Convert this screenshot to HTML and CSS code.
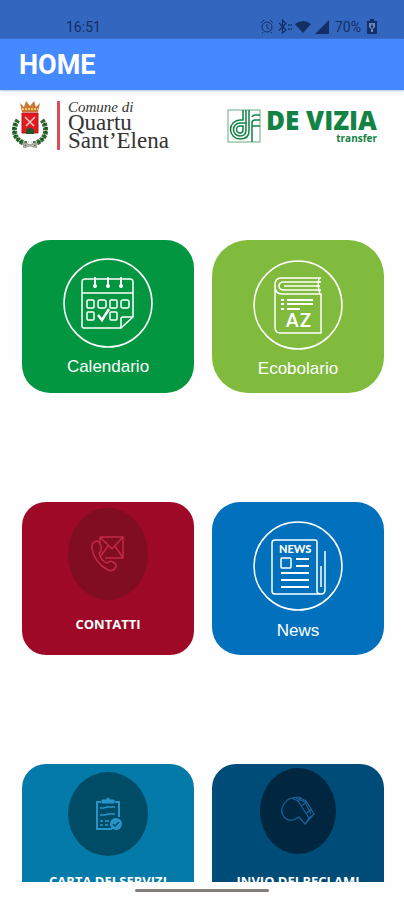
FILE: index.html
```
<!DOCTYPE html>
<html lang="it">
<head>
    <meta charset="UTF-8">
    <meta name="viewport" content="width=device-width, initial-scale=1.0">
    <title>Home</title>
    <link rel="stylesheet" href="styles.css">
</head>
<body>
    <div class="status-bar">
        <span class="clock">16:51</span>
        <div class="status-icons">
            <svg width="51" height="16" viewBox="0 0 51 16" fill="none" stroke="#142f63" stroke-width="1">
                <!-- alarm -->
                <circle cx="7" cy="8" r="5"/>
                <path d="M7 5v3.500l2 1.500M1 4l3-3M13 4l-3-3M3 13l-1 1M11 13l1 1"/>
                <!-- bluetooth -->
                <path d="M19 4l7 7-3.500 3V1L26 4.500l-7 7" stroke-width="1.200"/>
                <path d="M28 6h4M28 10h4" stroke-width="1.500" stroke-dasharray="1.500 1"/>
                <!-- wifi -->
                <path d="M35 5q8-6 16 0l-8 9z" fill="#142f63" stroke="none"/>
            </svg>
            <svg width="16" height="16" viewBox="0 0 16 16"><path d="M1 15L15 1v14z" fill="#142f63"/></svg>
            <span class="battery-level">70%</span>
            <svg width="12" height="17" viewBox="0 0 12 17">
                <path d="M4 1h4v2h3v13H1V3h3z" fill="#142f63"/>
                <path d="M3 5h6v4l-2 2v3H5v-3L3 9z" fill="#6c8dc6"/>
                <path d="M6.500 5v3h1L5.500 12V9h-1z" fill="#142f63"/>
            </svg>
        </div>
    </div>

    <header class="app-bar">
        <h1>HOME</h1>
    </header>

    <main class="content">
        <div class="brands">
            <div class="comune">
                <svg width="38" height="50" viewBox="0 0 38 50">
                    <!-- laurel wreath -->
                    <path d="M7 20C0 29 3 42 17 44M31 20c7 9 4 22-10 24" fill="none" stroke="#326b32" stroke-width="5" stroke-dasharray="3 1"/>
                    <path d="M5 23C0 31 5 41 15 45M33 23c5 8 0 18-10 22" fill="none" stroke="#174a20" stroke-width="2" stroke-dasharray="2 2"/>
                    <path d="M12 43l12 4M26 43l-12 4M13 43v5M25 43v5" stroke="#aaa7a4" stroke-width="2"/>
                    <!-- crown -->
                    <path d="M11 12L9 3l4 4 2-6 4 5 4-5 2 6 4-4-2 9z" fill="#c97838"/>
                    <path d="M11 9h16" stroke="#f1c66b" stroke-width="2" stroke-dasharray="2 1"/>
                    <!-- shield -->
                    <path d="M11 13h16v20H11z" fill="#e3191f" stroke="#b31920"/>
                    <path d="M14 17l9 9M24 17l-9 9" stroke="#f7c9c0" stroke-width="1.500"/>
                    <path d="M15 34v-4q4-5 8 0v4z" fill="#215829"/>
                </svg>
                <div class="comune-name">
                    <em>Comune di</em>
                    <span>Quartu</span>
                    <span>Sant’Elena</span>
                </div>
            </div>
            <div class="devizia">
                <svg width="34" height="34" viewBox="0 0 34 34" fill="none" stroke="#128344">
                    <rect x="1" y="1" width="32" height="32" stroke="#6aae84"/>
                    <g stroke-width="1.500">
                        <path d="M16 1v10h-3a9 9 0 0 0 0 19q9 0 9-8V1"/>
                        <path d="M19 1v13h-6a6 6 0 0 0 0 13q6 0 6-6v-7"/>
                        <path d="M16 17h-3a3 3 0 0 0 0 7q3 0 3-3z"/>
                        <path d="M25 33V14q0-3 3-3h5M25 8q1-2 3-2h5M25 17h8"/>
                    </g>
                </svg>
                <div class="devizia-name">
                    <strong>DE VIZIA</strong>
                    <span>transfer</span>
                </div>
            </div>
        </div>

        <nav class="tiles">
            <a href="#calendario" class="tile calendario">
                <svg width="90" height="90" viewBox="0 0 90 90" fill="none" stroke="#fff" stroke-width="1.500">
                    <circle cx="45" cy="45" r="44"/>
                    <path d="M58 70H21q-2 0-2-2V24q0-3 3-3h45q3 0 3 3v35zM58 70V61q0-2 2-2h10M19 35h51"/>
                    <path d="M32 19v9M45 19v9M58 19v9" stroke-width="2"/>
                    <g fill="#fff" stroke="none"><circle cx="32" cy="28" r="2"/><circle cx="45" cy="28" r="2"/><circle cx="58" cy="28" r="2"/></g>
                    <rect x="24" y="42" width="7" height="8" rx="1"/>
                    <rect x="35" y="42" width="8" height="8" rx="2"/>
                    <rect x="47" y="42" width="7" height="8" rx="1"/>
                    <rect x="58" y="42" width="8" height="8" rx="2"/>
                    <rect x="24" y="54" width="7" height="8" rx="1"/>
                    <rect x="47" y="54" width="7" height="8" rx="1"/>
                    <path d="M35 57l4 5 7-11" stroke-width="2.500"/>
                </svg>
                <span>Calendario</span>
            </a>
            <a href="#ecobolario" class="tile ecobolario">
                <svg width="90" height="90" viewBox="0 0 90 90" fill="none" stroke="#fff" stroke-width="1.500">
                    <circle cx="45" cy="45" r="44"/>
                    <path d="M68 18H28q-6 0-6 7v42q0 6 5 6h41V34H29q-7 0-7-8"/>
                    <path d="M68 22H31q-5 0-5 4t5 4h37M66 18q-2 8 1 16M31 26h36"/>
                    <path d="M34 40h26M34 44h26M34 49h13M28 40h3M28 44h3M28 49h3" stroke-width="2"/>
                    <text x="33" y="67" class="az-text">A</text>
                    <text x="47" y="67" class="az-text">Z</text>
                </svg>
                <span>Ecobolario</span>
            </a>
            <a href="#contatti" class="tile contatti">
                <svg width="82" height="92" viewBox="0 0 82 92" fill="none" stroke="#c22a45" stroke-width="1.500">
                    <ellipse cx="41" cy="46" rx="40" ry="46" fill="#800d22" stroke="none"/>
                    <path d="M33 29h23v21H38M33 29l12 12 11-12M33 49l8-11M56 50l-8-12M33 29v6"/>
                    <path d="M30 33q-6 1-5 8 3 14 16 21 5 2 8-3 1-3-3-5-3-2-6 1-6-2-8-10 3-2 2-6-1-5-4-6z"/>
                </svg>
                <span>CONTATTI</span>
            </a>
            <a href="#news" class="tile news">
                <svg width="90" height="90" viewBox="0 0 90 90" fill="none" stroke="#fff" stroke-width="1.500">
                    <circle cx="45" cy="45" r="44"/>
                    <path d="M64 70q0 3 4 3 4 0 4-4V30M64 70V21q0-2-2-2H22q-3 0-3 3v48q0 3 3 3h46"/>
                    <path d="M68 45v21"/>
                    <text x="26" y="32" class="news-text">NEWS</text>
                    <rect x="28" y="37" width="10" height="10" rx="1"/>
                    <path d="M43 38h13M43 45h13M28 52h28M28 59h28M28 66h28" stroke-width="2"/>
                </svg>
                <span>News</span>
            </a>
            <a href="#carta-servizi" class="tile servizi">
                <svg width="82" height="84" viewBox="0 0 82 84" fill="none" stroke="#2795c9" stroke-width="2">
                    <ellipse cx="41" cy="42" rx="40" ry="42" fill="#004c66" stroke="none"/>
                    <path d="M45 57H30V30h4M48 30h4v15"/>
                    <path d="M35 31v-3h4q2-4 4 0h4v3z" fill="#2795c9" stroke-width="1"/>
                    <path d="M33 36h4l3-1h8M33 43h5l3-1h7M33 49h3M38 49h4M33 53h3M38 53h3" stroke-width="1.500"/>
                    <circle cx="49" cy="52" r="6" fill="#2795c9" stroke="none"/>
                    <path d="M46 52l2 2 4-4" stroke="#004c66" stroke-width="1.500"/>
                </svg>
                <span>CARTA DEI SERVIZI</span>
            </a>
            <a href="#reclami" class="tile reclami">
                <svg width="78" height="86" viewBox="0 0 78 86" fill="none" stroke="#1b6298" stroke-width="1.200">
                    <ellipse cx="39" cy="43" rx="38" ry="43" fill="#002640" stroke="none"/>
                    <path d="M33 30l6-1 8 4 8 13-9 10-6-7q-8 6-14 1-6-6-1-14 3-5 8-6zM33 30l6 3 11 17M39 33l3-4M42 38l6-4M47 46l5-5M50 50l5-4M46 56l4-6M37 30l9 4 6 12"/>
                </svg>
                <span>INVIO DEI RECLAMI</span>
            </a>
        </nav>
    </main>

    <div class="gesture-bar"><div class="handle"></div></div>
</body>
</html>
```
FILE: styles.css
```
* {
    box-sizing: border-box;
}
body {
    margin: 0;
    height: 100vh;
    display: flex;
    flex-direction: column;
    background-color: #fefefe;
    font-family: Roboto, sans-serif;
}
.status-bar {
    display: flex;
    justify-content: space-between;
    align-items: center;
    flex-shrink: 0;
    height: 39px;
    padding: 14px 26px 0 66px;
    background-color: #3366bf;
    color: #142f63;
    font-size: 14px;
}
.status-icons {
    display: flex;
    align-items: center;
    gap: 3px;
}
.battery-level {
    margin: 0 2px;
}
.app-bar {
    display: flex;
    align-items: center;
    flex-shrink: 0;
    height: 51px;
    padding: 0 19px;
    background-color: #4489ff;
    color: white;
    z-index: 1;
    box-shadow: 0 1px 2px #a9c4ee;
}
.app-bar h1 {
    margin: 0;
    font-size: 27px;
    line-height: 32px;
}
.content {
    flex: 1;
    min-height: 0;
    overflow-y: auto;
    scrollbar-width: none;
}
.brands {
    display: flex;
    justify-content: space-between;
    align-items: flex-start;
    height: 60px;
    padding: 10px 27px 0 11px;
}
.comune {
    display: flex;
    align-items: center;
    gap: 8px;
}
.comune-name {
    display: flex;
    flex-direction: column;
    padding-left: 8px;
    border-left: 3px solid #d6505c;
    color: #333;
    font-family: "Liberation Serif", serif;
    font-size: 23px;
    line-height: 18px;
}
.comune-name em {
    font-size: 15px;
    line-height: 13px;
}
.devizia {
    display: flex;
    gap: 5px;
    padding-top: 9px;
    color: #128344;
    font-family: "Open Sans", sans-serif;
}
.devizia-name {
    display: flex;
    flex-direction: column;
    align-items: flex-end;
}
.devizia-name strong {
    font-size: 26px;
    font-weight: 800;
    line-height: 23px;
}
.devizia-name span {
    font-size: 10px;
    font-weight: 700;
    line-height: 12px;
}
.tiles {
    display: grid;
    grid-template-columns: 1fr 1fr;
    gap: 109px 18px;
    padding: 90px 20px 30px 22px;
}
.tile {
    display: flex;
    flex-direction: column;
    align-items: center;
    justify-content: space-between;
    height: 153px;
    padding: 18px 0 16px;
    border-radius: 28px;
    color: white;
    font-family: "Liberation Sans", Arial, sans-serif;
    font-size: 17px;
    line-height: 20px;
    text-decoration: none;
}
.calendario {
    background-color: #029640;
}
.ecobolario {
    background-color: #80bb3d;
    border-radius: 36px;
    padding: 20px 0 14px;
}
.news {
    background-color: #0271bd;
    padding: 19px 0 14px;
}
.contatti, .servizi, .reclami {
    border-radius: 24px;
    font-family: "Open Sans", sans-serif;
    font-size: 13px;
    font-weight: 700;
}
.contatti {
    background-color: #9d0926;
    padding: 6px 0 21px;
}
.servizi {
    background-color: #047aa8;
    padding: 8px 0 26px;
}
.reclami {
    background-color: #004c78;
    padding: 4px 0 26px;
}
.az-text, .news-text {
    fill: #fff;
    stroke: none;
    font-family: Lato, sans-serif;
    font-size: 18px;
    font-weight: 700;
}
.news-text {
    font-size: 11px;
    font-weight: 900;
}
.gesture-bar {
    display: flex;
    justify-content: center;
    flex-shrink: 0;
    height: 18px;
    padding-top: 7px;
}
.handle {
    width: 134px;
    height: 3px;
    border-radius: 2px;
    background-color: #857d7c;
}
```
